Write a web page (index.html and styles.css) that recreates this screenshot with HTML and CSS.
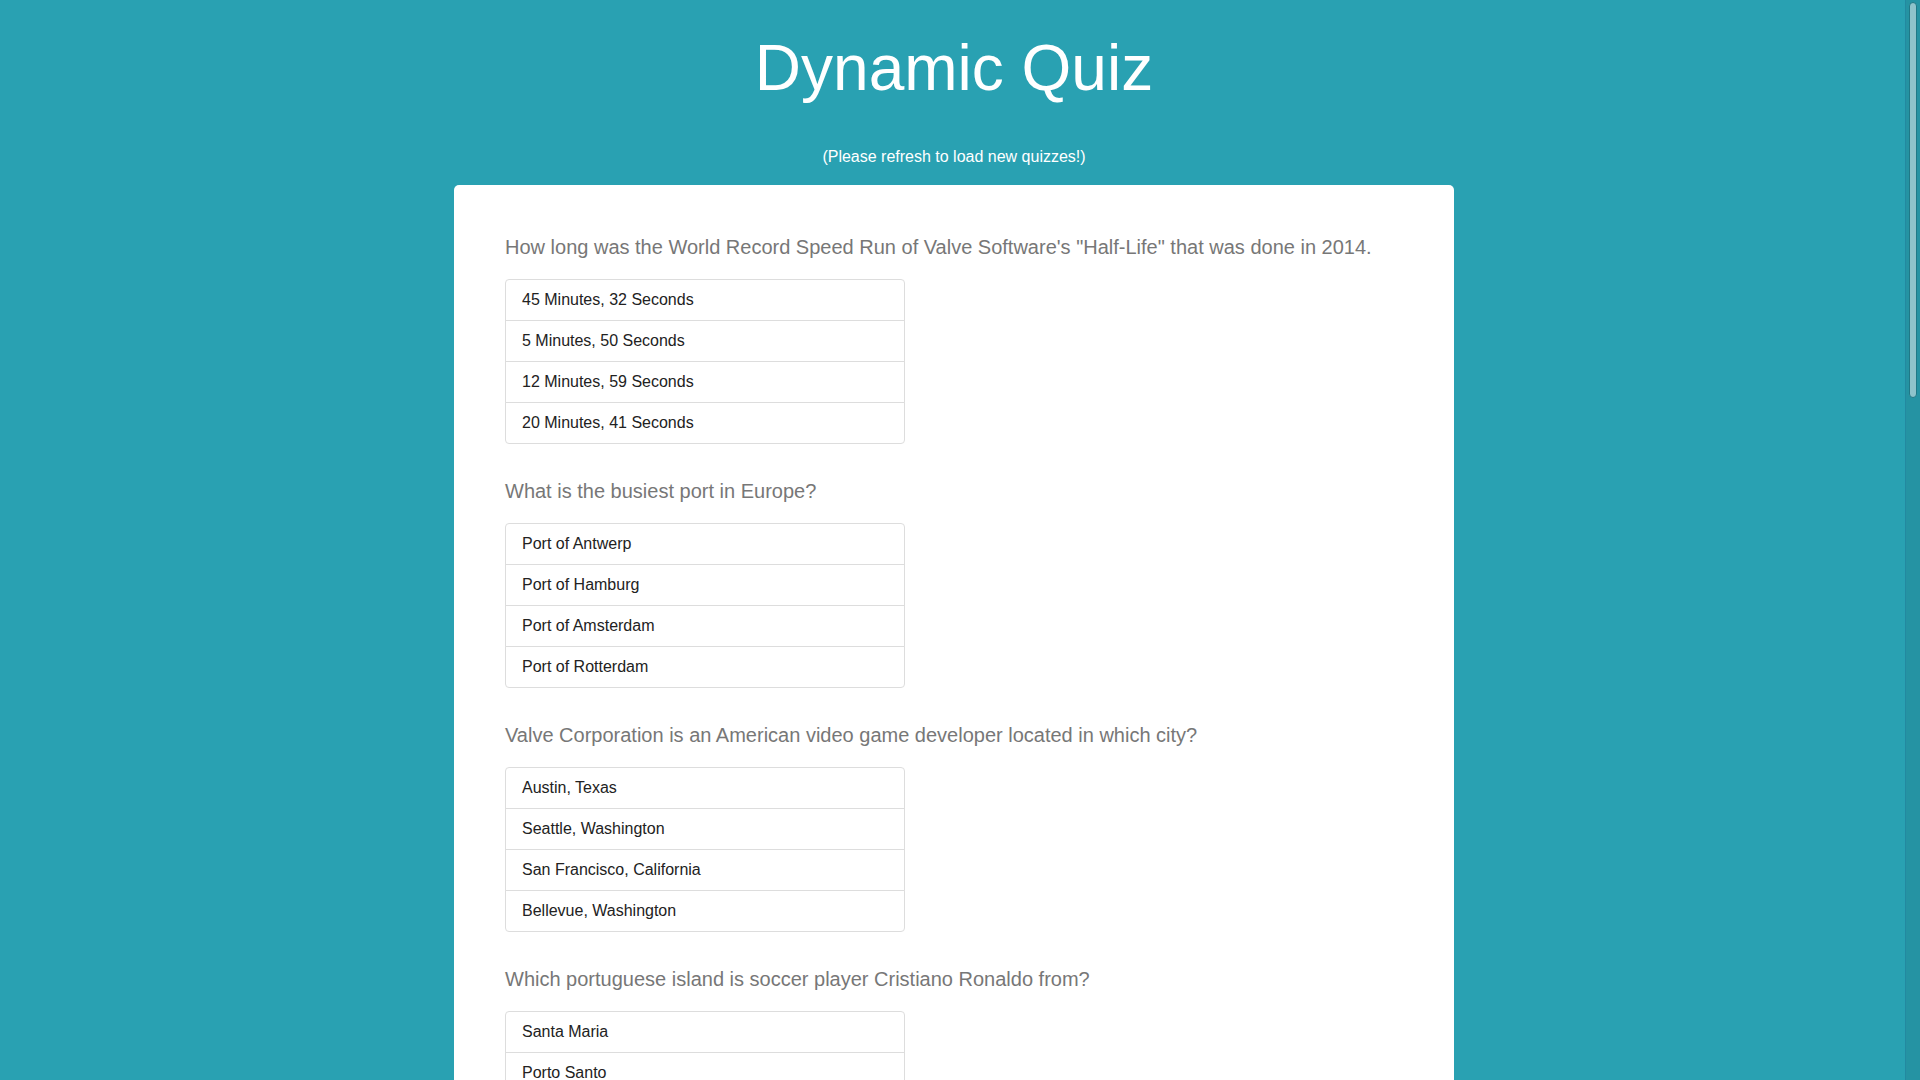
FILE: index.html
```html
<!DOCTYPE html>
<html lang="en">
<head>
<meta charset="utf-8">
<title>Dynamic Quiz</title>
<link rel="stylesheet" href="styles.css">
</head>
<body>
<header class="header">
  <h1 class="title">Dynamic Quiz</h1>
  <p class="subtitle">(Please refresh to load new quizzes!)</p>
</header>
<main class="card">
  <section class="quiz">
    <h3 class="question">How long was the World Record Speed Run of Valve Software's "Half-Life" that was done in 2014.</h3>
    <ul class="answers">
      <li class="answer">45 Minutes, 32 Seconds</li>
      <li class="answer">5 Minutes, 50 Seconds</li>
      <li class="answer">12 Minutes, 59 Seconds</li>
      <li class="answer">20 Minutes, 41 Seconds</li>
    </ul>
  </section>
  <section class="quiz">
    <h3 class="question">What is the busiest port in Europe?</h3>
    <ul class="answers">
      <li class="answer">Port of Antwerp</li>
      <li class="answer">Port of Hamburg</li>
      <li class="answer">Port of Amsterdam</li>
      <li class="answer">Port of Rotterdam</li>
    </ul>
  </section>
  <section class="quiz">
    <h3 class="question">Valve Corporation is an American video game developer located in which city?</h3>
    <ul class="answers">
      <li class="answer">Austin, Texas</li>
      <li class="answer">Seattle, Washington</li>
      <li class="answer">San Francisco, California</li>
      <li class="answer">Bellevue, Washington</li>
    </ul>
  </section>
  <section class="quiz">
    <h3 class="question">Which portuguese island is soccer player Cristiano Ronaldo from?</h3>
    <ul class="answers">
      <li class="answer">Santa Maria</li>
      <li class="answer">Porto Santo</li>
      <li class="answer">Terceira</li>
      <li class="answer">Madeira</li>
    </ul>
  </section>
  <section class="quiz">
    <h3 class="question">What is the capital of Australia?</h3>
    <ul class="answers">
      <li class="answer">Sydney</li>
      <li class="answer">Melbourne</li>
      <li class="answer">Canberra</li>
      <li class="answer">Perth</li>
    </ul>
  </section>
  <section class="quiz">
    <h3 class="question">Which planet is known as the Red Planet?</h3>
    <ul class="answers">
      <li class="answer">Venus</li>
      <li class="answer">Mars</li>
      <li class="answer">Jupiter</li>
      <li class="answer">Mercury</li>
    </ul>
  </section>
  <section class="quiz">
    <h3 class="question">In what year was the first iPhone released?</h3>
    <ul class="answers">
      <li class="answer">2005</li>
      <li class="answer">2006</li>
      <li class="answer">2007</li>
      <li class="answer">2008</li>
    </ul>
  </section>
  <section class="quiz">
    <h3 class="question">Who painted the Mona Lisa?</h3>
    <ul class="answers">
      <li class="answer">Michelangelo</li>
      <li class="answer">Leonardo da Vinci</li>
      <li class="answer">Raphael</li>
      <li class="answer">Donatello</li>
    </ul>
  </section>
  <section class="quiz">
    <h3 class="question">What is the chemical symbol for gold?</h3>
    <ul class="answers">
      <li class="answer">Ag</li>
      <li class="answer">Au</li>
      <li class="answer">Gd</li>
      <li class="answer">Go</li>
    </ul>
  </section>
  <section class="quiz">
    <h3 class="question">Which ocean is the largest on Earth?</h3>
    <ul class="answers">
      <li class="answer">Atlantic Ocean</li>
      <li class="answer">Indian Ocean</li>
      <li class="answer">Pacific Ocean</li>
      <li class="answer">Arctic Ocean</li>
    </ul>
  </section>
  <section class="quiz">
    <h3 class="question">How many players are on a soccer team on the field?</h3>
    <ul class="answers">
      <li class="answer">9</li>
      <li class="answer">10</li>
      <li class="answer">11</li>
      <li class="answer">12</li>
    </ul>
  </section>
</main>
<div class="scrollbar" aria-hidden="true"><div class="scrollbar-thumb"></div></div>
</body>
</html>
```
FILE: styles.css
```css
html, body {
  margin: 0;
  padding: 0;
}

body {
  background: #29a1b2;
  font-family: "Liberation Sans", Arial, sans-serif;
  font-size: 16px;
  color: #333;
  padding-right: 12px;
}

.header {
  text-align: center;
  color: #fff;
  padding-top: 33px;
}

.title {
  margin: 0;
  font-size: 64px;
  line-height: 70px;
  font-weight: normal;
}

.subtitle {
  margin: 44px 0 18px;
  font-size: 16px;
  line-height: 20px;
}

.card {
  display: block;
  box-sizing: border-box;
  width: 1000px;
  margin: 0 auto 40px;
  padding: 51px 51px 16px;
  background: #fff;
  border-radius: 5px;
}

.quiz {
  margin-bottom: 36px;
}

.question {
  margin: 0 0 21px;
  font-size: 20px;
  line-height: 22px;
  font-weight: normal;
  color: #777;
}

.answers {
  list-style: none;
  margin: 0;
  padding: 0;
  width: 400px;
}

.answer {
  padding: 10px 16px;
  line-height: 20px;
  border: 1px solid #ddd;
  margin-bottom: -1px;
  background: #fff;
  color: #222;
}

.answer:first-child {
  border-radius: 4px 4px 0 0;
}

.answer:last-child {
  margin-bottom: 0;
  border-radius: 0 0 4px 4px;
}

.scrollbar {
  position: fixed;
  top: 0;
  right: 0;
  width: 15px;
  height: 100vh;
  background: #2593a3;
  border-left: 1px solid #2389a0;
  box-sizing: border-box;
}

.scrollbar-thumb {
  margin: 2px auto 0;
  width: 8px;
  height: 396px;
  box-sizing: border-box;
  background: #8ec3cb;
  border: 1px solid #1f7886;
  border-radius: 4px;
}
```
